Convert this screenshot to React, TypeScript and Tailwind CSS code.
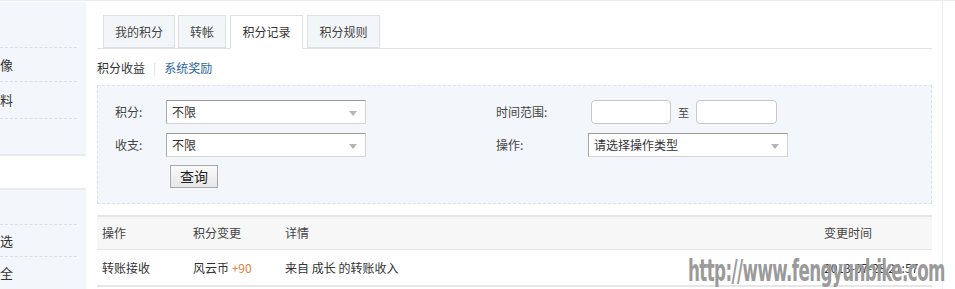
import React from "react";

const Arrow = () => (
  <svg width="8" height="5" viewBox="0 0 8 5" className="absolute right-[8px] top-[10px]">
    <path d="M0 0 L8 0 L4 5 Z" fill="#b5b5b5" />
  </svg>
);

const Select = ({ text, w }: { text: string; w: string }) => (
  <div
    className={`relative h-[24px] ${w} bg-white border border-[#d4d4d4] border-t-[#9a9a9a] border-l-[#a8a8a8] flex items-center pl-[5px] text-[12px] text-[#333]`}
  >
    {text}
    <Arrow />
  </div>
);

export default function App() {
  return (
    <div
      className="relative w-[955px] h-[289px] overflow-hidden bg-white flex border-t border-[#ececec] text-[12px] text-[#333]"
      style={{ fontFamily: '"Noto Sans CJK SC", "Noto Sans", sans-serif' }}
    >
      {/* sidebar */}
      <div className="w-[86px] flex flex-col pt-[1px]">
        <div className="h-[153px] bg-[#f3f7fb] flex flex-col">
          <div className="h-[46px] border-b border-dashed border-[#d9dfe6] mr-[9px]" />
          <div className="h-[34px] border-b border-dashed border-[#d9dfe6] mr-[9px] flex items-center text-[13px]">像</div>
          <div className="h-[37px] border-b border-dashed border-[#d9dfe6] mr-[9px] flex items-center text-[13px]">料</div>
        </div>
        <div className="h-[36px] bg-white border-y-[2px] border-[#e8ecf0]" />
        <div className="flex-1 bg-[#f3f7fb] flex flex-col">
          <div className="h-[35px] border-b border-dashed border-[#d9dfe6] mr-[9px]" />
          <div className="h-[32px] border-b border-dashed border-[#d9dfe6] mr-[9px] flex items-center text-[13px]">选</div>
          <div className="h-[32px] mr-[9px] flex items-center text-[13px]">全</div>
        </div>
      </div>

      {/* main */}
      <div className="w-[857px] border-r border-[#eeeeee] pl-[11px] pr-[10px] flex flex-col">
        {/* tabs */}
        <div className="mt-[15px] h-[33px] border-b border-[#e2e2e2] flex items-end pl-[6px] gap-[3px]">
          <div className="h-[33px] px-[10px] border border-[#dcdfe3] bg-[#f3f6f9] flex items-center text-[#444] w-[72px] justify-center">我的积分</div>
          <div className="h-[33px] border border-[#dcdfe3] bg-[#f3f6f9] flex items-center text-[#444] w-[48px] justify-center">转帐</div>
          <div className="h-[34px] -mb-[1px] ml-[1px] border border-[#dcdfe3] border-b-white bg-white flex items-center text-[#333] w-[73px] justify-center">积分记录</div>
          <div className="h-[33px] ml-[1px] border border-[#dcdfe3] bg-[#f3f6f9] flex items-center text-[#444] w-[73px] justify-center">积分规则</div>
        </div>

        {/* sub nav */}
        <div className="h-[36px] flex items-center pt-[1px]">
          <span className="text-[#333]">积分收益</span>
          <span className="mx-[8px] text-[#ddd]">|</span>
          <span className="text-[#2a65a0]">系统奖励</span>
        </div>

        {/* filter box */}
        <div className="h-[119px] bg-[#f3f7fb] border border-dashed border-[#d9e2ec] flex pt-[14px]">
          <div className="w-[398px] flex flex-col">
            <div className="flex items-center h-[24px]">
              <span className="w-[51px] ml-[17px] text-[#444]">积分:</span>
              <Select text="不限" w="w-[200px]" />
            </div>
            <div className="flex items-center h-[24px] mt-[9px]">
              <span className="w-[51px] ml-[17px] text-[#444]">收支:</span>
              <Select text="不限" w="w-[200px]" />
            </div>
            <div className="ml-[72px] mt-[8px]">
              <button className="w-[48px] h-[23px] border border-[#a9a9a9] bg-gradient-to-b from-[#fafafa] to-[#e6e6e6] text-[14px] text-[#222] flex items-center justify-center">
                查询
              </button>
            </div>
          </div>
          <div className="flex flex-col">
            <div className="flex items-center h-[24px]">
              <span className="w-[95px] text-[#444]">时间范围:</span>
              <div className="w-[80px] h-[24px] bg-white border border-[#c8c8c8] rounded-[4px]" />
              <span className="mx-[7px] text-[#444] text-[11px]">至</span>
              <div className="w-[81px] h-[24px] bg-white border border-[#c8c8c8] rounded-[4px]" />
            </div>
            <div className="flex items-center h-[24px] mt-[9px]">
              <span className="w-[92px] text-[#444]">操作:</span>
              <Select text="请选择操作类型" w="w-[200px]" />
            </div>
          </div>
        </div>

        {/* table */}
        <div className="mt-[11px] flex flex-col">
          <div className="h-[35px] bg-[#f7f7f7] border-t-[2px] border-b border-[#e6e6e6] flex items-center text-[#444]">
            <span className="w-[96px] pl-[5px]">操作</span>
            <span className="w-[92px]">积分变更</span>
            <span className="flex-1">详情</span>
            <span className="w-[108px]">变更时间</span>
          </div>
          <div className="h-[37px] border-b-[2px] border-[#e6e6e6] flex items-center text-[#333]">
            <span className="w-[96px] pl-[5px]">转账接收</span>
            <span className="w-[92px]">
              风云币 <span className="text-[#e0803a]">+90</span>
            </span>
            <span className="flex-1">来自 成长 的转账收入</span>
            <span className="w-[108px]">2013-07-28 21:57</span>
          </div>
        </div>
      </div>

      {/* watermark */}
      <div
        className="absolute left-[688px] top-[254px] text-[31px] font-bold text-[#9a9a9a] leading-none tracking-[-1px] origin-left scale-x-[0.6] whitespace-nowrap"
        style={{ fontFamily: '"DejaVu Sans Condensed", "DejaVu Sans", sans-serif' }}
      >
        http://www.fengyunbike.com
      </div>
    </div>
  );
}
